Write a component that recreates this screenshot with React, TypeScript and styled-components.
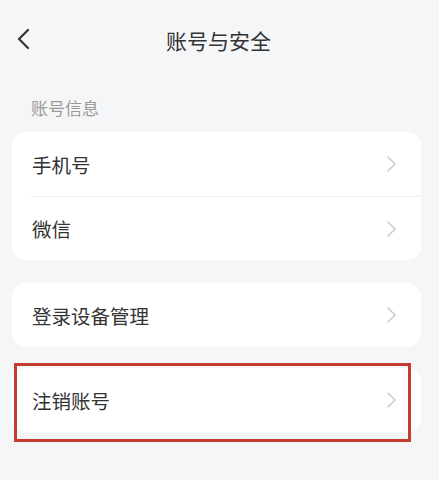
import React from 'react'
import styled, { createGlobalStyle } from 'styled-components'

const GlobalStyle = createGlobalStyle`
  html, body {
    margin: 0;
    padding: 0;
    background: #f5f6f8;
    font-family: "Noto Sans CJK SC", "Noto Sans", sans-serif;
  }
`

const Page = styled.div`
  width: 439px;
  height: 480px;
  background: #f5f6f8;
  overflow: hidden;
`

const Header = styled.div`
  position: relative;
  height: 80px;
  display: flex;
  align-items: center;
  justify-content: center;
`

const BackButton = styled.div`
  position: absolute;
  left: 15px;
  top: 26px;
  width: 16px;
  height: 26px;
  display: flex;
  align-items: center;
  justify-content: center;
`

const Title = styled.h1`
  margin: 0 0 0 -2px;
  font-size: 21px;
  font-weight: 400;
  color: #333;
`

const SectionLabel = styled.div`
  padding: 16px 31px 0;
  height: 36px;
  font-size: 17px;
  line-height: 24px;
  color: #9a9a9a;
`

const Card = styled.div`
  margin: 0 18px 0 12px;
  background: #fff;
  border-radius: 14px;
  overflow: hidden;
`

const Group = styled.div<{ $gap?: number }>`
  position: relative;
  padding-top: ${(p) => p.$gap ?? 0}px;
`

const Row = styled.div<{ $divider?: boolean }>`
  height: 64px;
  margin-left: 18px;
  padding: 0 24px 0 2px;
  display: flex;
  align-items: center;
  justify-content: space-between;
  border-top: ${(p) => (p.$divider ? '1px solid #efefef' : 'none')};
  box-sizing: border-box;
`

const RowText = styled.span`
  font-size: 19.5px;
  color: #333;
`

const Highlight = styled.div`
  position: absolute;
  left: 14px;
  top: 16px;
  width: 397px;
  height: 79px;
  border: 3px solid #c53b30;
  box-sizing: border-box;
  pointer-events: none;
`

const Chevron = () => (
  <svg width="11" height="18" viewBox="0 0 11 18">
    <path d="M2 2 L9 9 L2 16" fill="none" stroke="#cbcbcb" strokeWidth="1.5" strokeLinecap="round" strokeLinejoin="round" />
  </svg>
)

const Item: React.FC<{ label: string; divider?: boolean }> = ({ label, divider }) => (
  <Row $divider={divider}>
    <RowText>{label}</RowText>
    <Chevron />
  </Row>
)

export default function App() {
  return (
    <Page>
      <GlobalStyle />
      <Header>
        <BackButton>
          <svg width="14" height="22" viewBox="0 0 14 22">
            <path d="M12 2 L3 11 L12 20" fill="none" stroke="#333" strokeWidth="2.2" strokeLinecap="round" strokeLinejoin="round" />
          </svg>
        </BackButton>
        <Title>账号与安全</Title>
      </Header>
      <SectionLabel>账号信息</SectionLabel>
      <Group>
        <Card>
          <Item label="手机号" />
          <Item label="微信" divider />
        </Card>
      </Group>
      <Group $gap={23}>
        <Card>
          <Item label="登录设备管理" />
        </Card>
      </Group>
      <Group $gap={21}>
        <Card>
          <Item label="注销账号" />
        </Card>
        <Highlight />
      </Group>
    </Page>
  )
}
